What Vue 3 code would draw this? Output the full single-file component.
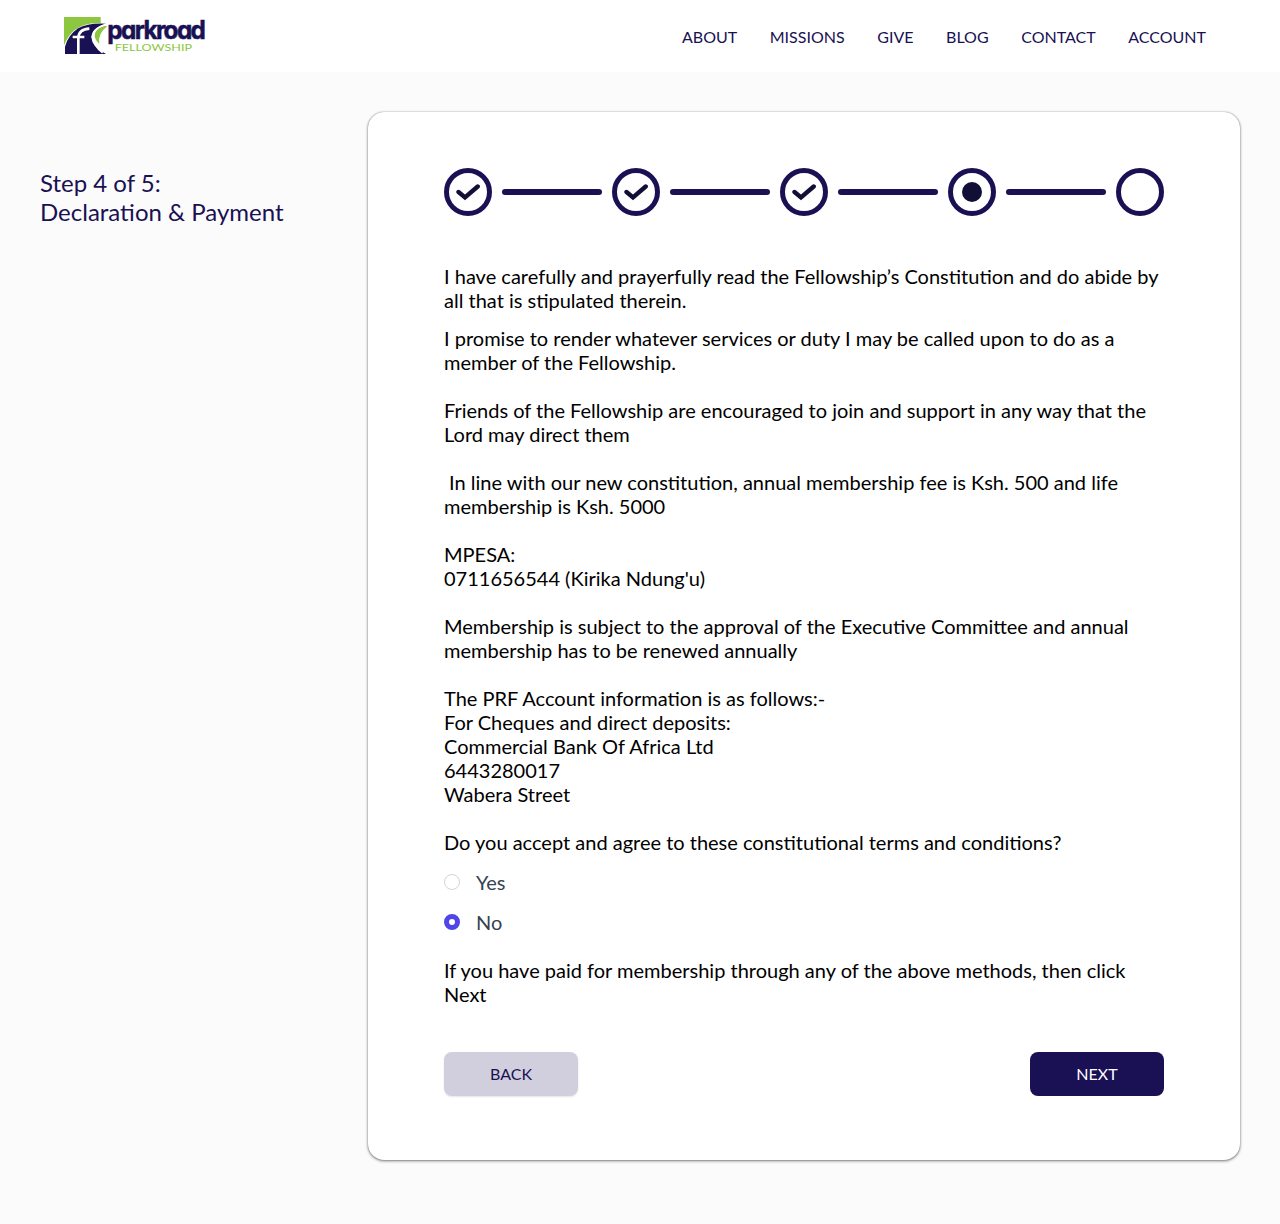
<script setup>
import { ref } from 'vue'

const links = ['About', 'Missions', 'Give', 'Blog', 'Contact', 'Account']
const steps = ['done', 'done', 'done', 'current', 'todo']
const accepted = ref('No')
</script>

<template>
  <div class="page">
    <header class="topbar">
      <a class="logo" aria-label="Parkroad Fellowship">
        <svg width="144" height="40" viewBox="24 24 432 120">
          <path fill="#8dc63f" d="M24 27H134V45Q88 42 56 66Q36 82 24 112Z" />
          <path fill="#191153" d="M27 138V116Q36 82 66 61Q96 44 150 47Q108 60 106 88Q108 118 150 138Z" />
          <path fill="#8dc63f" d="M136 54Q116 66 116 84Q118 98 130 107Q124 78 154 54Z" />
          <path fill="none" stroke="#fff" stroke-width="6" d="M150 49Q110 62 110 86Q112 112 140 134" />
          <path fill="none" stroke="#fff" stroke-width="8" d="M100 62Q68 64 67 90V138M50 87H85" />
          <text class="brand" x="154" y="94" textLength="291" lengthAdjust="spacingAndGlyphs">parkroad</text>
          <text class="brand-sub" x="176" y="129" textLength="232" lengthAdjust="spacingAndGlyphs">FELLOWSHIP</text>
        </svg>
      </a>
      <nav class="nav">
        <a v-for="link in links" :key="link">{{ link }}</a>
      </nav>
    </header>

    <main class="content">
      <h1 class="title">Step 4 of 5:<br />Declaration &amp; Payment</h1>

      <section class="card">
        <div class="stepper">
          <template v-for="(step, i) in steps" :key="i">
            <span v-if="i" class="bar"></span>
            <span class="step">
              <svg v-if="step === 'done'" width="24" height="18" viewBox="0 0 24 18">
                <path d="M2.5 9 9 14.4 21.7 3.5" fill="none" stroke="#120f37" stroke-width="4.4" stroke-linecap="round" />
              </svg>
              <span v-else-if="step === 'current'" class="dot"></span>
            </span>
          </template>
        </div>

        <div class="terms">
          <p class="first">I have carefully and prayerfully read the Fellowship’s Constitution and do abide by all that is stipulated therein.</p>
          <p>I promise to render whatever services or duty I may be called upon to do as a member of the Fellowship.</p>
          <p>Friends of the Fellowship are encouraged to join and support in any way that the Lord may direct them</p>
          <p>&nbsp;In line with our new constitution, annual membership fee is Ksh. 500 and life membership is Ksh. 5000</p>
          <p>MPESA:<br />0711656544 (Kirika Ndung'u)</p>
          <p>Membership is subject to the approval of the Executive Committee and annual membership has to be renewed annually</p>
          <p>
            The PRF Account information is as follows:-<br />
            For Cheques and direct deposits:<br />
            Commercial Bank Of Africa Ltd<br />
            6443280017<br />
            Wabera Street
          </p>
          <p class="question">Do you accept and agree to these constitutional terms and conditions?</p>
          <div class="options">
            <label v-for="option in ['Yes', 'No']" :key="option">
              <input v-model="accepted" type="radio" name="accept" :value="option" />
              {{ option }}
            </label>
          </div>
          <p>If you have paid for membership through any of the above methods, then click Next</p>
        </div>

        <div class="actions">
          <button class="back" type="button">BACK</button>
          <button class="next" type="button">NEXT</button>
        </div>
      </section>
    </main>
  </div>
</template>

<style>
body {
  margin: 0;
  background: #fbfbfb;
}
</style>

<style scoped>
.page {
  min-height: 1224px;
  box-sizing: border-box;
  background: #fbfbfb;
  color: #000;
  font-family: Lato, sans-serif;
}
.topbar {
  display: flex;
  justify-content: space-between;
  height: 72px;
  box-sizing: border-box;
  padding: 16px 74px 0 64px;
  background: #fff;
}
.logo svg {
  display: block;
  overflow: visible;
}
.brand {
  font: 700 75px Inter, sans-serif;
  font-feature-settings: "cv11";
  letter-spacing: -5px;
  fill: #191153;
  stroke: #191153;
  stroke-width: 1.5;
}
.brand-sub {
  font: 400 31px Lato, sans-serif;
  fill: #8dc63f;
}
.nav {
  display: flex;
  gap: 32.6px;
  padding-top: 9px;
  font-size: 16px;
  line-height: 24px;
  text-transform: uppercase;
  color: #191153;
}
.content {
  display: flex;
  justify-content: space-between;
  align-items: flex-start;
  padding: 40px 40px 0;
}
.title {
  margin: 56px 0 0;
  font-size: 24px;
  line-height: 29px;
  font-weight: 400;
  color: #191153;
}
.card {
  width: 872px;
  height: 1048px;
  box-sizing: border-box;
  padding: 56px 76px 64px;
  border-radius: 16px;
  background: #fff;
  box-shadow: 0 0 1px rgba(0, 0, 0, 0.5), 0 1px 3px rgba(0, 0, 0, 0.5);
}
.stepper {
  display: flex;
  align-items: center;
  justify-content: space-between;
}
.step {
  display: flex;
  align-items: center;
  justify-content: center;
  width: 48px;
  height: 48px;
  box-sizing: border-box;
  border: 5px solid #191153;
  border-radius: 50%;
}
.dot {
  width: 20px;
  height: 20px;
  border-radius: 50%;
  background: #120f37;
}
.bar {
  width: 100px;
  height: 6px;
  border-radius: 3px;
  background: #191153;
}
.terms {
  margin-top: 48px;
  font-size: 20px;
  line-height: 24px;
}
.terms p {
  margin: 0 0 24px;
}
.terms .first {
  margin-bottom: 14px;
}
.terms .question {
  margin-bottom: 16px;
}
.options {
  display: flex;
  flex-direction: column;
  gap: 16px;
  margin-bottom: 24px;
  color: #374151;
}
.options label {
  display: flex;
  gap: 16px;
}
.options input {
  appearance: none;
  width: 16px;
  height: 16px;
  margin: 4px 0 0;
  box-sizing: border-box;
  border: 1px solid #d1d5db;
  border-radius: 50%;
  background: #fff;
}
.options input:checked {
  border: 5px solid #4f46e5;
}
.actions {
  display: flex;
  justify-content: space-between;
  margin-top: 46px;
}
.actions button {
  width: 134px;
  height: 44px;
  padding: 0;
  border: 0;
  border-radius: 8px;
  font: 400 16px/24px Lato, sans-serif;
}
.back {
  background: #d1cfdd;
  color: #191153;
  box-shadow: 0 1px 2px rgba(0, 0, 0, 0.1);
}
.next {
  background: #191153;
  color: #fff;
}
</style>
